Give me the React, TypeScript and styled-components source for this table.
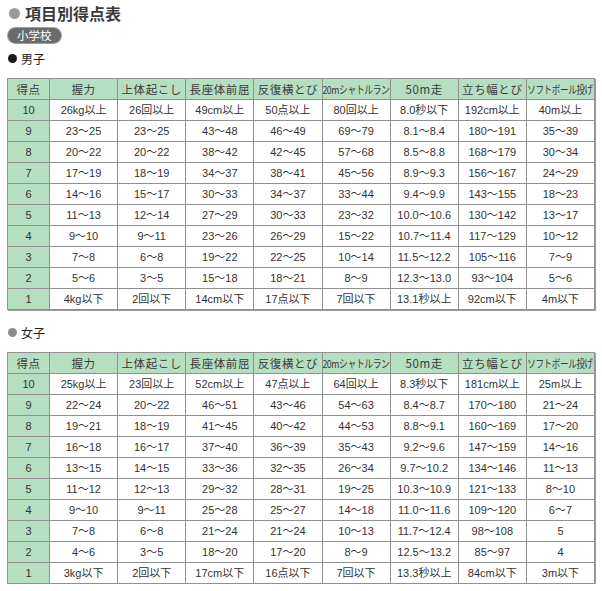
import styled, { createGlobalStyle } from "styled-components";

const GlobalStyle = createGlobalStyle`
  body {
    margin: 0;
    background: #fff;
    font-family: "Liberation Sans", "Noto Sans CJK JP", sans-serif;
    color: #333;
  }
`;

type Row = [string, ...string[]];

const heads = [
  "得点",
  "握力",
  "上体起こし",
  "長座体前屈",
  "反復横とび",
  "20mシャトルラン",
  "50m走",
  "立ち幅とび",
  "ソフトボール投げ",
];
// headings squeezed to fit their cell, with the squeeze for each
const narrowHeads: Record<string, number> = {
  "20mシャトルラン": 0.8,
  "ソフトボール投げ": 0.78,
};

const boys: Row[] = [
  ["10", "26kg以上", "26回以上", "49cm以上", "50点以上", "80回以上", "8.0秒以下", "192cm以上", "40m以上"],
  ["9", "23～25", "23～25", "43～48", "46～49", "69～79", "8.1～8.4", "180～191", "35～39"],
  ["8", "20～22", "20～22", "38～42", "42～45", "57～68", "8.5～8.8", "168～179", "30～34"],
  ["7", "17～19", "18～19", "34～37", "38～41", "45～56", "8.9～9.3", "156～167", "24～29"],
  ["6", "14～16", "15～17", "30～33", "34～37", "33～44", "9.4～9.9", "143～155", "18～23"],
  ["5", "11～13", "12～14", "27～29", "30～33", "23～32", "10.0～10.6", "130～142", "13～17"],
  ["4", "9～10", "9～11", "23～26", "26～29", "15～22", "10.7～11.4", "117～129", "10～12"],
  ["3", "7～8", "6～8", "19～22", "22～25", "10～14", "11.5～12.2", "105～116", "7～9"],
  ["2", "5～6", "3～5", "15～18", "18～21", "8～9", "12.3～13.0", "93～104", "5～6"],
  ["1", "4kg以下", "2回以下", "14cm以下", "17点以下", "7回以下", "13.1秒以上", "92cm以下", "4m以下"],
];

const girls: Row[] = [
  ["10", "25kg以上", "23回以上", "52cm以上", "47点以上", "64回以上", "8.3秒以下", "181cm以上", "25m以上"],
  ["9", "22～24", "20～22", "46～51", "43～46", "54～63", "8.4～8.7", "170～180", "21～24"],
  ["8", "19～21", "18～19", "41～45", "40～42", "44～53", "8.8～9.1", "160～169", "17～20"],
  ["7", "16～18", "16～17", "37～40", "36～39", "35～43", "9.2～9.6", "147～159", "14～16"],
  ["6", "13～15", "14～15", "33～36", "32～35", "26～34", "9.7～10.2", "134～146", "11～13"],
  ["5", "11～12", "12～13", "29～32", "28～31", "19～25", "10.3～10.9", "121～133", "8～10"],
  ["4", "9～10", "9～11", "25～28", "25～27", "14～18", "11.0～11.6", "109～120", "6～7"],
  ["3", "7～8", "6～8", "21～24", "21～24", "10～13", "11.7～12.4", "98～108", "5"],
  ["2", "4～6", "3～5", "18～20", "17～20", "8～9", "12.5～13.2", "85～97", "4"],
  ["1", "3kg以下", "2回以下", "17cm以下", "16点以下", "7回以下", "13.3秒以上", "84cm以下", "3m以下"],
];

const ScoreTable: React.FC<{ rows: Row[] }> = ({ rows }) => (
  <Table>
    <colgroup>
      <col style={{ width: 42 }} />
      {heads.slice(1).map((h) => (
        <col key={h} />
      ))}
    </colgroup>
    <thead>
      <tr>
        {heads.map((h) => (
          <Th key={h}>
            {narrowHeads[h] ? <Narrow $scale={narrowHeads[h]}>{h}</Narrow> : h}
          </Th>
        ))}
      </tr>
    </thead>
    <tbody>
      {rows.map((r) => (
        <tr key={r[0]}>
          <ScoreCell>{r[0]}</ScoreCell>
          {r.slice(1).map((v, i) => (
            <Td key={i}>{v}</Td>
          ))}
        </tr>
      ))}
    </tbody>
  </Table>
);

export default function App() {
  return (
    <>
      <GlobalStyle />
      <Page>
        <Title>
          <Dot $color="#9a9a9a" $size={11} />
          項目別得点表
        </Title>
        <Badge>小学校</Badge>
        <SubHead>
          <Dot $color="#1a1a1a" $size={9} />
          男子
        </SubHead>
        <ScoreTable rows={boys} />
        <SubHead $gap>
          <Dot $color="#8c8c8c" $size={9} />
          女子
        </SubHead>
        <ScoreTable rows={girls} />
      </Page>
    </>
  );
}

const Page = styled.div`
  width: 602px;
  padding: 4px 7px 0 7px;
  box-sizing: border-box;
`;

const Title = styled.h1`
  display: flex;
  align-items: center;
  gap: 5px;
  margin: 0 0 0 2px;
  height: 18px;
  font-family: "Noto Sans CJK JP", sans-serif;
  font-size: 16px;
  font-weight: 700;
  color: #3a3a3a;
`;

const Dot = styled.span<{ $color: string; $size: number }>`
  display: inline-block;
  width: ${(p) => p.$size}px;
  height: ${(p) => p.$size}px;
  border-radius: 50%;
  background: ${(p) => p.$color};
  flex-shrink: 0;
`;

const Badge = styled.div`
  display: inline-block;
  margin-top: 6px;
  margin-left: 1px;
  padding: 0 9px;
  height: 15px;
  line-height: 15px;
  border-radius: 8px;
  background: #6b6b6b;
  box-shadow: 0 0 0 1px #a0a0a0;
  color: #fff;
  font-family: "Noto Sans CJK JP", sans-serif;
  font-size: 11.5px;
`;

const SubHead = styled.div<{ $gap?: boolean }>`
  display: flex;
  align-items: center;
  gap: 4px;
  margin: ${(p) => (p.$gap ? "14px" : "6px")} 0 12px 1px;
  height: 16px;
  font-family: "Noto Sans CJK JP", sans-serif;
  font-size: 12px;
  color: #222;
`;

const Table = styled.table`
  width: 588px;
  table-layout: fixed;
  border-collapse: collapse;
  border: 1px solid #6f6f6f;
  box-shadow: 1px 1px 0 #9a9a9a;
  font-size: 11px;
  line-height: 20px;
  color: #333;
`;

const Th = styled.th`
  height: 20px;
  padding: 0;
  border: 1px solid #909090;
  background: #b6dec1;
  font-family: "Noto Sans CJK JP", sans-serif;
  font-weight: 400;
  font-size: 11.5px;
  letter-spacing: 0.6px;
  color: #3a3a3a;
  text-align: center;
  white-space: nowrap;
`;

const Narrow = styled.span<{ $scale: number }>`
  display: inline-block;
  font-size: 11px;
  letter-spacing: -0.5px;
  transform: scaleX(${(p) => p.$scale});
  transform-origin: center;
  margin: 0 -10px;
`;

const Td = styled.td`
  height: 20px;
  padding: 0;
  border: 1px solid #909090;
  background: #fff;
  text-align: center;
  white-space: nowrap;
`;

const ScoreCell = styled(Td)`
  background: #b6dec1;
`;
